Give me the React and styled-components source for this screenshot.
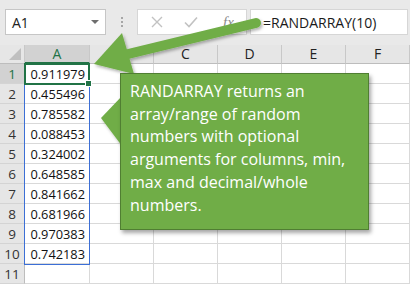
import React from "react";
import styled, { createGlobalStyle } from "styled-components";

const GlobalStyle = createGlobalStyle`
  html, body {
    margin: 0;
    padding: 0;
    background: #ffffff;
    overflow: hidden;
  }
  body {
    font-family: "Open Sans", "Liberation Sans", sans-serif;
  }
`;

const Page = styled.div`
  position: relative;
  width: 410px;
  height: 285px;
  overflow: hidden;
  background: #ffffff;
  display: flex;
  flex-direction: column;
`;

const FormulaBar = styled.div`
  height: 45px;
  box-sizing: border-box;
  background: #e9e9e9;
  display: flex;
  align-items: flex-start;
  padding: 9px 2px 0 5px;
`;

const NameBox = styled.div`
  width: 101px;
  height: 26px;
  box-sizing: border-box;
  background: #ffffff;
  border: 1px solid #c6c6c6;
  display: flex;
  align-items: center;
  justify-content: space-between;
  padding: 0 6px 0 6px;
  font-size: 14px;
  color: #222;
`;

const DropArrow = styled.span`
  width: 0;
  height: 0;
  border-left: 4px solid transparent;
  border-right: 4px solid transparent;
  border-top: 4px solid #6e6e6e;
`;

const Grip = styled.div`
  width: 31px;
  height: 26px;
  display: flex;
  flex-direction: column;
  align-items: center;
  justify-content: center;
  gap: 2px;
  span {
    width: 2px;
    height: 2px;
    background: #a6a6a6;
  }
`;

const ButtonBox = styled.div`
  width: 110px;
  height: 26px;
  box-sizing: border-box;
  background: #ffffff;
  border: 1px solid #d6d6d6;
  display: flex;
  align-items: center;
  padding-left: 13px;
  gap: 21px;
`;

const Fx = styled.span`
  font-family: "Liberation Serif", serif;
  font-style: italic;
  font-size: 15px;
  color: #8a8a8a;
  margin-left: 4px;
`;

const FormulaInput = styled.div`
  flex: 1;
  height: 26px;
  box-sizing: border-box;
  margin-left: 3px;
  background: #ffffff;
  border: 1px solid #d6d6d6;
  display: flex;
  align-items: center;
  padding-left: 12px;
  font-size: 14px;
  color: #1a1a1a;
`;

const Sheet = styled.div`
  display: grid;
  grid-template-columns: 25px 65px 64px 64px 64px 64px 64px;
  grid-template-rows: 19px repeat(11, 20px);
  font-size: 12.8px;
`;

const Corner = styled.div`
  grid-column: 1;
  grid-row: 1;
  background: #e6e6e6;
  border-right: 1px solid #c8c8c8;
  border-bottom: 1px solid #bdbdbd;
  position: relative;
  &::after {
    content: "";
    position: absolute;
    right: 3px;
    bottom: 3px;
    border-left: 12px solid transparent;
    border-bottom: 12px solid #bfbfbf;
  }
`;

const ColHead = styled.div`
  grid-row: 1;
  grid-column: ${(p) => p.$col};
  background: ${(p) => (p.$active ? "#d2d2d2" : "#e6e6e6")};
  border-right: 1px solid #c8c8c8;
  border-bottom: ${(p) => (p.$active ? "2px solid #217346" : "1px solid #bdbdbd")};
  color: ${(p) => (p.$active ? "#217346" : "#222")};
  font-size: 14px;
  display: flex;
  align-items: center;
  justify-content: center;
  line-height: 1;
`;

const RowHead = styled.div`
  grid-column: 1;
  grid-row: ${(p) => p.$row};
  background: ${(p) => (p.$active ? "#d2d2d2" : "#e6e6e6")};
  border-right: 1px solid #bdbdbd;
  border-bottom: 1px solid #d4d4d4;
  color: ${(p) => (p.$active ? "#217346" : "#333")};
  font-size: 13.5px;
  display: flex;
  align-items: center;
  justify-content: center;
`;

const Cell = styled.div`
  grid-column: ${(p) => p.$col};
  grid-row: ${(p) => p.$row};
  border-right: 1px solid #d9d9d9;
  border-bottom: 1px solid #d9d9d9;
  display: flex;
  align-items: center;
  justify-content: flex-end;
  padding-right: 4px;
  color: #111;
`;

const SpillRange = styled.div`
  grid-column: 2;
  grid-row: 2 / span 10;
  border: 1px solid #3c6fd6;
  margin: 0 0 -1px -1px;
  pointer-events: none;
  z-index: 1;
`;

const ActiveCell = styled.div`
  grid-column: 2;
  grid-row: 2;
  border: 2px solid #217346;
  margin: -1px 0 -1px -1px;
  position: relative;
  z-index: 2;
  &::after {
    content: "";
    position: absolute;
    right: -4px;
    bottom: -4px;
    width: 5px;
    height: 5px;
    background: #217346;
    border: 1px solid #ffffff;
  }
`;

const Overlay = styled.svg`
  position: absolute;
  left: 0;
  top: 0;
  width: 410px;
  height: 285px;
  pointer-events: none;
  z-index: 4;
`;

const Callout = styled.div`
  position: absolute;
  left: 120px;
  top: 73px;
  width: 249px;
  height: 157px;
  box-sizing: border-box;
  background: #70ad47;
  border: 1px solid #507e32;
  box-shadow: 2px 3px 4px rgba(0, 0, 0, 0.35);
  padding: 6px 8px 0 9px;
  color: #ffffff;
  font-size: 16px;
  line-height: 22.7px;
  z-index: 5;
`;

const columns = ["A", "B", "C", "D", "E", "F"];
const values = [
  "0.911979",
  "0.455496",
  "0.785582",
  "0.088453",
  "0.324002",
  "0.648585",
  "0.841662",
  "0.681966",
  "0.970383",
  "0.742183",
];

const CancelIcon = () => (
  <svg width="12" height="12" viewBox="0 0 12 12">
    <path d="M1 1 L11 11 M11 1 L1 11" stroke="#c2c2c2" strokeWidth="1.4" fill="none" />
  </svg>
);

const EnterIcon = () => (
  <svg width="14" height="12" viewBox="0 0 14 12">
    <path d="M1 6.5 L5 10.5 L13 1.5" stroke="#c2c2c2" strokeWidth="1.6" fill="none" />
  </svg>
);

const App = () => {
  const rows = Array.from({ length: 11 }, (_, i) => i + 1);

  return (
    <Page>
      <GlobalStyle />
      <FormulaBar>
        <NameBox>
          A1
          <DropArrow />
        </NameBox>
        <Grip>
          <span />
          <span />
          <span />
        </Grip>
        <ButtonBox>
          <CancelIcon />
          <EnterIcon />
          <Fx>fx</Fx>
        </ButtonBox>
        <FormulaInput>=RANDARRAY(10)</FormulaInput>
      </FormulaBar>

      <Sheet>
        <Corner />
        {columns.map((c, ci) => (
          <ColHead key={c} $col={ci + 2} $active={c === "A"}>
            {c}
          </ColHead>
        ))}
        {rows.map((r) => (
          <React.Fragment key={r}>
            <RowHead $row={r + 1} $active={r === 1}>
              {r}
            </RowHead>
            {columns.map((c, ci) => (
              <Cell key={c} $row={r + 1} $col={ci + 2}>
                {c === "A" && r <= 10 ? values[r - 1] : ""}
              </Cell>
            ))}
          </React.Fragment>
        ))}
        <SpillRange />
        <ActiveCell />
      </Sheet>

      <Overlay viewBox="0 0 410 285">
        <defs>
          <filter id="shade" x="-20%" y="-20%" width="140%" height="140%">
            <feDropShadow dx="1.5" dy="2" stdDeviation="1.5" floodColor="#000" floodOpacity="0.3" />
          </filter>
        </defs>
        <g filter="url(#shade)">
          <line x1="256" y1="23" x2="124" y2="55" stroke="#70ad47" strokeWidth="10" strokeLinecap="round" />
          <polygon points="94,64 122,33 134,74" fill="#70ad47" />
          <polygon points="122,96 101,118 122,146" fill="#70ad47" />
        </g>
      </Overlay>

      <Callout>
        RANDARRAY returns an array/range of random numbers with optional arguments for
        columns, min, max and decimal/whole numbers.
      </Callout>
    </Page>
  );
};

export default App;
